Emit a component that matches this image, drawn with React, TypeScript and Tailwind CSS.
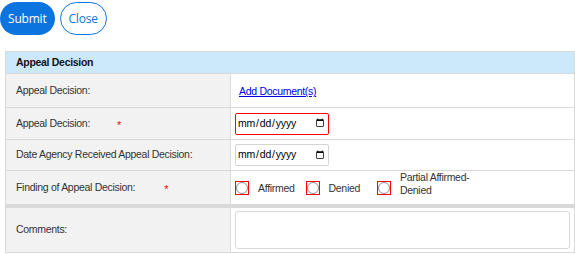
import React from 'react';

const label = "text-[10.5px] tracking-[-0.3px] text-[#333]";

function Row({ h, left, children, req, reqGap = 'ml-[27px]', border = 'border-b border-[#d9d9d9]' }: {
  h: string;
  left: string;
  children?: React.ReactNode;
  req?: boolean;
  reqGap?: string;
  border?: string;
}) {
  return (
    <div className={`flex ${h} ${border}`}>
      <div className="w-[225px] shrink-0 bg-[#f2f2f2] border-r border-[#d9d9d9] flex items-center pl-[10px]">
        <span className={label}>{left}</span>
        {req && <span className={`${reqGap} text-[11px] text-[#ff0000] leading-none mt-[4px]`}>*</span>}
      </div>
      <div className="flex-1 flex items-center pl-[4px] pr-[3px]">
        {children}
      </div>
    </div>
  );
}

function Radio({ text, wrap }: { text: string; wrap?: boolean }) {
  return (
    <label className="flex items-center">
      <span className="w-[14px] h-[14px] border border-[#ff0000] flex items-center justify-center">
        <span className="w-[12px] h-[12px] rounded-full border border-[#8f8f8f] bg-white" />
      </span>
      <span className={`${label} ml-[9px] ${wrap ? 'w-[80px] leading-[13px] -mt-[7px]' : 'mt-[3px]'}`}>{text}</span>
    </label>
  );
}

export default function App() {
  return (
    <div className="w-[575px] h-[254px] bg-white font-['Liberation_Sans',Arial,sans-serif] overflow-hidden">
      <div className="flex gap-[5px] pt-[2px]">
        <button className="h-[33px] px-[8px] rounded-full bg-[#0b74de] text-white text-[12px] tracking-[-0.2px] font-['Open_Sans',sans-serif]">
          Submit
        </button>
        <button className="h-[33px] px-[8px] rounded-full bg-white border border-[#0b74de] text-[#0b74de] text-[12px] tracking-[-0.2px] font-['Open_Sans',sans-serif]">
          Close
        </button>
      </div>

      <div className="ml-[5px] mt-[16px] w-[570px] border border-[#d9d9d9]">
        <div className="h-[22px] bg-[#cce9fb] border-b border-[#d9d9d9] flex items-center pl-[10px]">
          <span className="text-[10.5px] tracking-[-0.3px] font-bold text-[#111]">Appeal Decision</span>
        </div>

        <Row h="h-[34px]" left="Appeal Decision:">
          <a href="#" className="text-[10.5px] tracking-[-0.3px] text-[#0000ee] underline ml-[4px] mt-[3px]">Add Document(s)</a>
        </Row>

        <Row h="h-[32px]" left="Appeal Decision:" req>
          <input type="date" className="w-[94px] h-[22px] text-[10.5px] tracking-[-0.2px] border border-[#ff0000] rounded-[2px] px-[1px] bg-white" />
        </Row>

        <Row h="h-[31px]" left="Date Agency Received Appeal Decision:">
          <input type="date" className="w-[94px] h-[22px] text-[10.5px] tracking-[-0.2px] border border-[#d4d4d4] rounded-[2px] px-[1px] bg-white" />
        </Row>

        <Row h="h-[37px]" left="Finding of Appeal Decision:" req reqGap="ml-[29px]" border="border-b-[4px] border-[#d9d9d9]">
          <div className="flex items-center">
            <Radio text="Affirmed" />
            <div className="ml-[11px]"><Radio text="Denied" /></div>
            <div className="ml-[17px]"><Radio text="Partial Affirmed-Denied" wrap /></div>
          </div>
        </Row>

        <Row h="h-[44px]" left="Comments:" border="">
          <textarea className="w-[335px] h-[38px] border border-[#d9d9d9] rounded-[3px] resize-none" />
        </Row>
      </div>
    </div>
  );
}
